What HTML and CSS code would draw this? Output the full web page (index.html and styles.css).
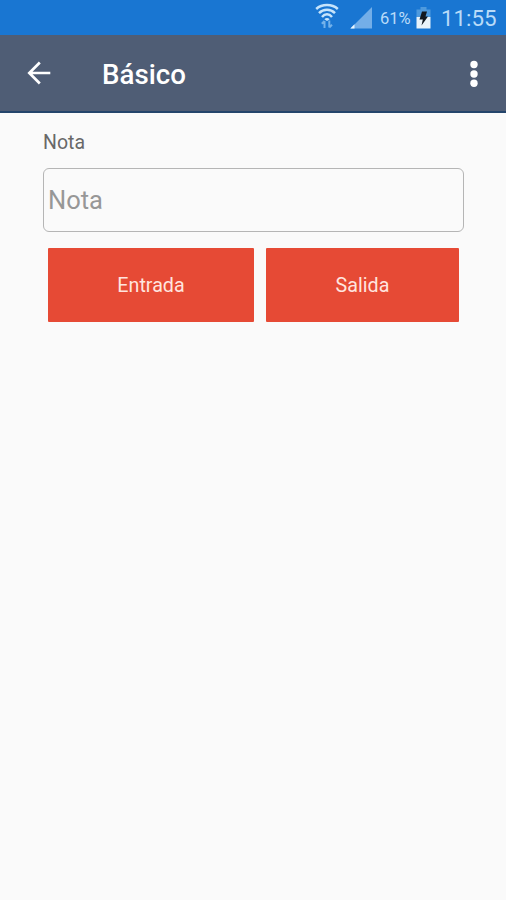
FILE: index.html
```html
<!DOCTYPE html>
<html lang="es">
<head>
<meta charset="utf-8">
<title>Básico</title>
<link rel="stylesheet" href="styles.css">
</head>
<body>
<div class="status">
  <svg class="wifi" viewBox="0 0 24 26" width="24" height="26" fill="none" stroke="#c6e4fb" stroke-width="2.500">
    <path d="M1.200 6C7 .8 17 .8 22.800 6M4 10.200C8.500 5.700 15.500 5.700 20 10.200M7 14C10 10.400 14 10.400 17 14"/>
    <path d="M9.300 16.300Q12 13.600 14.700 16.300L12 18Z" fill="#c6e4fb" stroke="none"/>
    <path d="M9.500 25V18M6.800 20.700L9.500 18M14.300 17.500V24.500M17 21.800L14.300 24.500" stroke="#74b2ea" stroke-width="2"/>
  </svg>
  <svg class="signal" viewBox="0 0 23 22" width="23" height="22">
    <path d="M22 0V21.500H.500Z" fill="#73aee8"/>
    <path d="M4.500 17.300V21.500H.300Z" fill="#eaf7ff"/>
  </svg>
  <span class="percent">61%</span>
  <svg class="battery" viewBox="0 0 15 22" width="15" height="22">
    <path d="M4.500 0H10.500V2.500H14.500V10H.500V2.500H4.500Z" fill="#4f9add"/>
    <path d="M.500 10H14.500V21.500H.500Z" fill="#e9f3fa"/>
    <path d="M6 4.500H11L9.500 9.500H12L5.500 18.500L6.800 12.500H3.500Z" fill="#111820"/>
  </svg>
  <span class="clock">11:55</span>
</div>
<header class="bar">
  <svg class="back" viewBox="0 0 24 24" width="24" height="24" fill="none" stroke="#fff" stroke-width="2.700">
    <path d="M23.300 12H2.500M12.800 1.500L2.300 12L12.800 22.500"/>
  </svg>
  <h1 class="title">Básico</h1>
  <svg class="more" viewBox="0 0 8 28" width="8" height="28" fill="#fff">
    <circle cx="4" cy="4.500" r="3.700"/><circle cx="4" cy="14" r="3.700"/><circle cx="4" cy="23.300" r="3.700"/>
  </svg>
</header>
<main class="form">
  <label class="label" for="nota">Nota</label>
  <input class="field" id="nota" type="text" placeholder="Nota">
  <div class="actions">
    <button class="button" type="button">Entrada</button>
    <button class="button" type="button">Salida</button>
  </div>
</main>
</body>
</html>
```
FILE: styles.css
```css
* { box-sizing: border-box; }
body {
  margin: 0;
  min-height: 900px;
  background: #fafafa;
  font-family: Roboto, "Liberation Sans", sans-serif;
}
.status {
  display: flex;
  align-items: center;
  justify-content: flex-end;
  height: 35px;
  padding-right: 11px;
  background: #1976d2;
  color: #b9dbf8;
}
.wifi { margin-right: 11px; margin-top: -3px; }
.signal { margin-right: 7px; }
.percent { width: 32px; margin-right: 4px; font-size: 16.5px; line-height: 20px; margin-top: 3px; }
.battery { margin-right: 10px; }
.clock { width: 54px; font-size: 22.3px; line-height: 28px; }
.bar {
  display: flex;
  align-items: center;
  height: 78px;
  padding: 0 28px 0 27px;
  background: #4f5d75;
  border-bottom: 2px solid #24456b;
}
.back { margin-top: -1px; }
.more { margin-top: 2px; }
.title {
  flex: 1;
  margin: 3px 0 0 51px;
  color: #fff;
  font-size: 27.7px;
  font-weight: 500;
  line-height: 32px;
}
.form { padding: 18px 42px 0 43px; }
.label {
  display: block;
  color: #686868;
  font-size: 19.5px;
  line-height: 24px;
}
.field {
  display: block;
  width: 100%;
  height: 64px;
  margin-top: 13px;
  padding: 0 4px;
  border: 1px solid #b5b5b5;
  border-radius: 6px;
  background: #fafafa;
  font: 25.5px/32px Roboto, "Liberation Sans", sans-serif;
}
.field::placeholder { color: #979797; }
.actions {
  display: grid;
  grid-template-columns: 206px 193px;
  gap: 12px;
  padding: 16px 0 0 5px;
}
.button {
  height: 74px;
  padding: 2px 0 0;
  border: 0;
  border-radius: 1px;
  background: #e64a35;
  color: #ffe4df;
  font: 19.7px/24px Roboto, "Liberation Sans", sans-serif;
}
```
